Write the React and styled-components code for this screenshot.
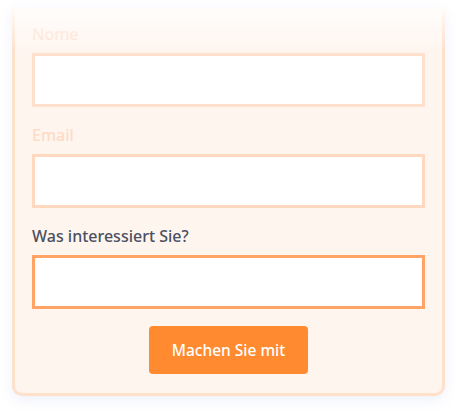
import React from "react";
import styled, { createGlobalStyle } from "styled-components";

const Global = createGlobalStyle`
  html, body { margin: 0; padding: 0; background: #ffffff; }
  body { font-family: "Noto Sans", "Open Sans", Arial, sans-serif; }
`;

const Page = styled.div`
  padding: 8px 13px 18px 12px;
`;

const Card = styled.form`
  position: relative;
  box-sizing: border-box;
  width: 433px;
  border: 3px solid #fee0cb;
  border-top-color: #fff2ea;
  border-radius: 0 0 10px 10px;
  background: #fff5ef;
  box-shadow: 0 4px 14px rgba(120, 140, 210, 0.12);
  padding: 13px 17px 19px 17px;
  display: flex;
  flex-direction: column;
  gap: 18px;
`;

const TopFade = styled.div`
  position: absolute;
  left: -3px;
  right: -3px;
  top: -3px;
  height: 44px;
  background: linear-gradient(
    to bottom,
    rgba(255, 255, 255, 0.85),
    rgba(255, 255, 255, 0)
  );
  pointer-events: none;
`;

const Field = styled.label`
  display: flex;
  flex-direction: column;
  gap: 9px;
`;

const Label = styled.span`
  font-size: 16px;
  line-height: 20px;
  font-weight: 500;
  color: ${(p) => p.$color || "#4b5061"};
`;

const Input = styled.input`
  box-sizing: border-box;
  width: 100%;
  height: 54px;
  margin: 0;
  border: 3px solid ${(p) => p.$border || "#fed8bd"};
  border-radius: 0;
  background: #ffffff;
  outline: none;
  font: inherit;
`;

const Actions = styled.div`
  display: flex;
  justify-content: center;
  margin-top: -1px;
`;

const Button = styled.button`
  width: 159px;
  height: 48px;
  border: none;
  border-radius: 4px;
  background: #ff8a30;
  color: #ffffff;
  font-family: "Noto Sans", "Open Sans", Arial, sans-serif;
  font-size: 15.5px;
  font-weight: 500;
  cursor: pointer;
`;

const fields = [
  { label: "Nome", color: "#fde0cd", border: "#fee0cc" },
  { label: "Email", color: "#fddbc5", border: "#fed9bf" },
  { label: "Was interessiert Sie?", color: "#4b5061", border: "#ffa466" },
];

export default function App() {
  return (
    <>
      <Global />
      <Page>
        <Card onSubmit={(e) => e.preventDefault()}>
          {fields.map((f) => (
            <Field key={f.label}>
              <Label $color={f.color}>{f.label}</Label>
              <Input $border={f.border} />
            </Field>
          ))}
          <Actions>
            <Button type="submit">Machen Sie mit</Button>
          </Actions>
          <TopFade />
        </Card>
      </Page>
    </>
  );
}
